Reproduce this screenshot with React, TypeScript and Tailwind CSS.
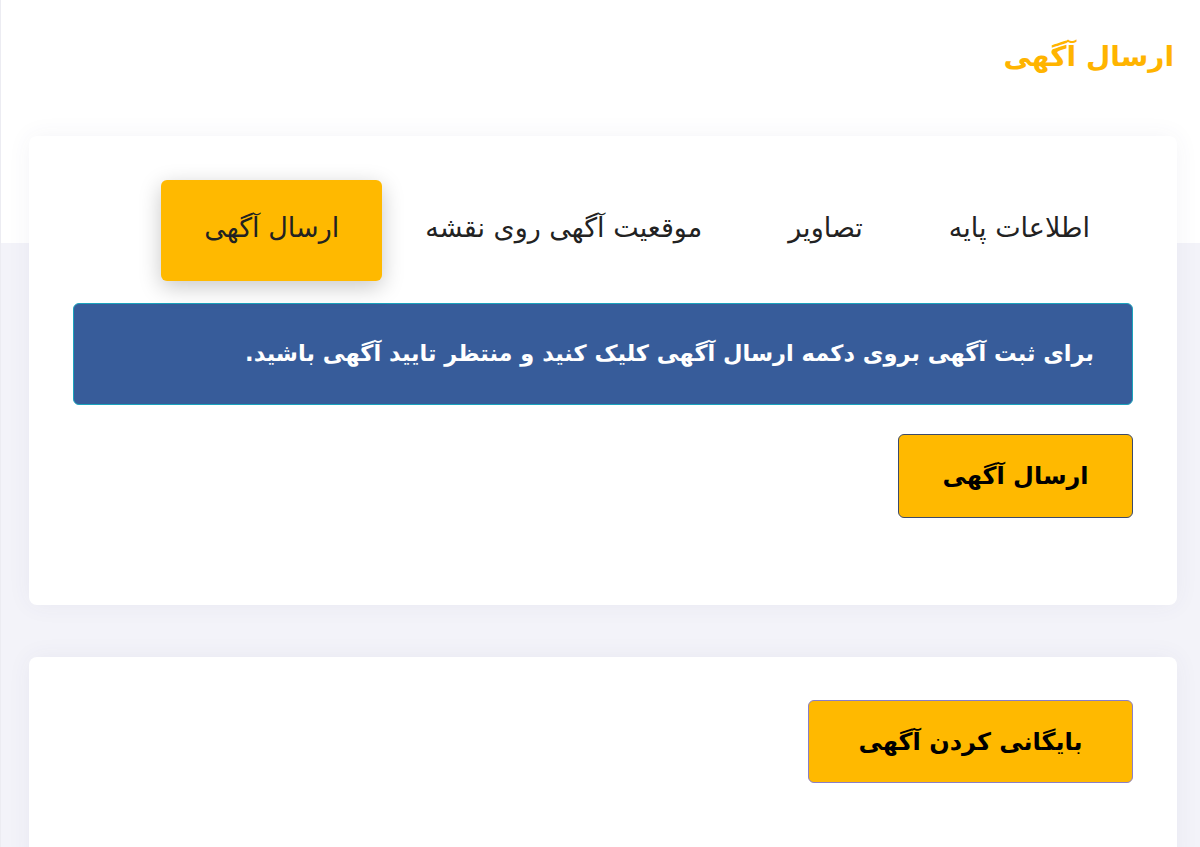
const tabs = ['اطلاعات پایه', 'تصاویر', 'موقعیت آگهی روی نقشه', 'ارسال آگهی'];

const font = { fontFamily: '"DejaVu Sans", "Noto Sans", sans-serif' };

const App = () => {
    const active = 3;
    return (
        <div dir="rtl" style={font}
            className="min-h-screen bg-[linear-gradient(to_bottom,#ffffff_243px,#f3f3f9_243px)] border-l border-[#ececf2] pl-[28px] pr-[23px] pb-10">
            <h1 className="h-[136px] pt-[36px] pr-[3px] text-[28px] font-bold text-[#ffb400]">
                ارسال آگهی
            </h1>

            <div className="bg-white rounded-lg shadow-[0_0_24px_rgba(60,60,120,0.06)] px-[44px] pt-[44px] pb-[87px]">
                <ul className="flex">
                    {tabs.map((t, i) => (
                        <li key={t}
                            className={`h-[101px] px-[43px] pb-[4px] flex items-center text-[27px] text-[#222] rounded-md ${i === active ? 'bg-[#ffb900] shadow-[0_6px_22px_rgba(0,0,0,0.22)]' : ''}`}>
                            {t}
                        </li>
                    ))}
                </ul>

                <div className="mt-[22px] h-[102px] flex items-center px-[38px] bg-[#375c9a] border border-[#1ba3bd] rounded-md text-white text-[22.5px] font-bold">
                    برای ثبت آگهی بروی دکمه ارسال آگهی کلیک کنید و منتظر تایید آگهی باشید.
                </div>

                <button className="mt-[29px] w-[235px] h-[84px] bg-[#ffb900] border border-[#3c4a6b] rounded-md text-[24px] font-bold text-black">
                    ارسال آگهی
                </button>
            </div>

            <div className="mt-[52px] bg-white rounded-lg shadow-[0_0_24px_rgba(60,60,120,0.06)] px-[44px] pt-[43px] pb-[87px]">
                <button className="w-[325px] h-[83px] bg-[#ffb900] border border-[#8a7fc8] rounded-md text-[24px] font-bold text-black">
                    بایگانی کردن آگهی
                </button>
            </div>
        </div>
    );
};

export default App;
